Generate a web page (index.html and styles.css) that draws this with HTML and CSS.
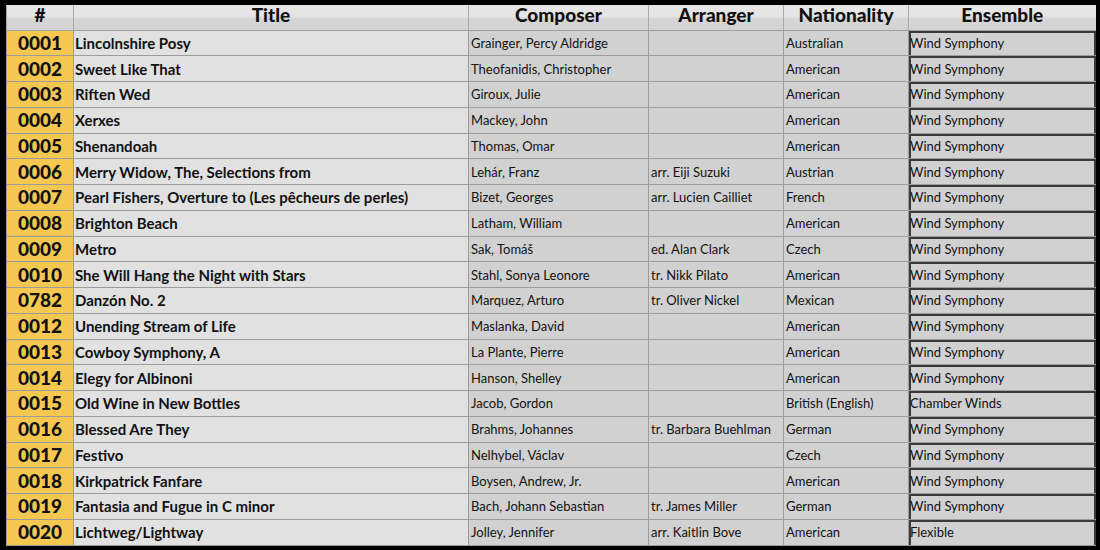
FILE: index.html
```html
<!DOCTYPE html>
<html>
<head>
<meta charset="utf-8">
<link rel="stylesheet" href="styles.css">
</head>
<body>
<div class="frame">
<table class="sheet">
<colgroup>
<col class="c-num"><col class="c-title"><col class="c-comp"><col class="c-arr"><col class="c-nat"><col class="c-ens">
</colgroup>
<thead>
<tr><th>#</th><th>Title</th><th>Composer</th><th>Arranger</th><th>Nationality</th><th>Ensemble</th></tr>
</thead>
<tbody>
<tr><td class="num">0001</td><td class="title">Lincolnshire Posy</td><td>Grainger, Percy Aldridge</td><td></td><td>Australian</td><td class="ens">Wind Symphony</td></tr>
<tr><td class="num">0002</td><td class="title">Sweet Like That</td><td>Theofanidis, Christopher</td><td></td><td>American</td><td class="ens">Wind Symphony</td></tr>
<tr><td class="num">0003</td><td class="title">Riften Wed</td><td>Giroux, Julie</td><td></td><td>American</td><td class="ens">Wind Symphony</td></tr>
<tr><td class="num">0004</td><td class="title">Xerxes</td><td>Mackey, John</td><td></td><td>American</td><td class="ens">Wind Symphony</td></tr>
<tr><td class="num">0005</td><td class="title">Shenandoah</td><td>Thomas, Omar</td><td></td><td>American</td><td class="ens">Wind Symphony</td></tr>
<tr><td class="num">0006</td><td class="title">Merry Widow, The, Selections from</td><td>Lehár, Franz</td><td>arr. Eiji Suzuki</td><td>Austrian</td><td class="ens">Wind Symphony</td></tr>
<tr><td class="num">0007</td><td class="title">Pearl Fishers, Overture to (Les pêcheurs de perles)</td><td>Bizet, Georges</td><td>arr. Lucien Cailliet</td><td>French</td><td class="ens">Wind Symphony</td></tr>
<tr><td class="num">0008</td><td class="title">Brighton Beach</td><td>Latham, William</td><td></td><td>American</td><td class="ens">Wind Symphony</td></tr>
<tr><td class="num">0009</td><td class="title">Metro</td><td>Sak, Tomáš</td><td>ed. Alan Clark</td><td>Czech</td><td class="ens">Wind Symphony</td></tr>
<tr><td class="num">0010</td><td class="title">She Will Hang the Night with Stars</td><td>Stahl, Sonya Leonore</td><td>tr. Nikk Pilato</td><td>American</td><td class="ens">Wind Symphony</td></tr>
<tr><td class="num">0782</td><td class="title">Danzón No. 2</td><td>Marquez, Arturo</td><td>tr. Oliver Nickel</td><td>Mexican</td><td class="ens">Wind Symphony</td></tr>
<tr><td class="num">0012</td><td class="title">Unending Stream of Life</td><td>Maslanka, David</td><td></td><td>American</td><td class="ens">Wind Symphony</td></tr>
<tr><td class="num">0013</td><td class="title">Cowboy Symphony, A</td><td>La Plante, Pierre</td><td></td><td>American</td><td class="ens">Wind Symphony</td></tr>
<tr><td class="num">0014</td><td class="title">Elegy for Albinoni</td><td>Hanson, Shelley</td><td></td><td>American</td><td class="ens">Wind Symphony</td></tr>
<tr><td class="num">0015</td><td class="title">Old Wine in New Bottles</td><td>Jacob, Gordon</td><td></td><td>British (English)</td><td class="ens">Chamber Winds</td></tr>
<tr><td class="num">0016</td><td class="title">Blessed Are They</td><td>Brahms, Johannes</td><td>tr. Barbara Buehlman</td><td>German</td><td class="ens">Wind Symphony</td></tr>
<tr><td class="num">0017</td><td class="title">Festivo</td><td>Nelhybel, Václav</td><td></td><td>Czech</td><td class="ens">Wind Symphony</td></tr>
<tr><td class="num">0018</td><td class="title">Kirkpatrick Fanfare</td><td>Boysen, Andrew, Jr.</td><td></td><td>American</td><td class="ens">Wind Symphony</td></tr>
<tr><td class="num">0019</td><td class="title">Fantasia and Fugue in C minor</td><td>Bach, Johann Sebastian</td><td>tr. James Miller</td><td>German</td><td class="ens">Wind Symphony</td></tr>
<tr><td class="num">0020</td><td class="title">Lichtweg/Lightway</td><td>Jolley, Jennifer</td><td>arr. Kaitlin Bove</td><td>American</td><td class="ens">Flexible</td></tr>
</tbody>
</table>
</div>
</body>
</html>
```
FILE: styles.css
```css
html, body {
  margin: 0;
  padding: 0;
  background: #000;
}
.frame {
  width: 1100px;
  height: 550px;
  box-sizing: border-box;
  padding: 5px 5px 5px 6px;
  background: #000;
}
.sheet {
  width: 1089px;
  border-collapse: collapse;
  table-layout: fixed;
  font-family: Lato, "Liberation Sans", sans-serif;
  color: #111;
}
.c-num { width: 67px; }
.c-title { width: 395px; }
.c-comp { width: 180px; }
.c-arr { width: 135px; }
.c-nat { width: 125px; }
.c-ens { width: 187px; }

.sheet th {
  height: 25px;
  padding: 0 0 4px 0;
  box-sizing: border-box;
  font-size: 19px;
  font-weight: 900;
  text-align: center;
  line-height: 20px;
  background: linear-gradient(#e6e6e6 0%, #e4e4e4 45%, #d5d5d5 55%, #d3d3d3 100%);
  border-left: 1px solid #a8a8a8;
  border-bottom: 1px solid #a0a0a0;
}
.sheet tbody tr {
  height: 25.75px;
}
.sheet td {
  padding: 0 2px;
  font-size: 13px;
  font-weight: 400;
  line-height: 16px;
  white-space: nowrap;
  overflow: hidden;
  background: #d1d1d1;
  border: 1px solid #9c9c9c;
  vertical-align: middle;
}
.sheet td.num {
  background: #f6c851;
  font-size: 19px;
  font-weight: 900;
  text-align: center;
  padding: 0;
}
.sheet td.title {
  background: #e1e1e1;
  font-size: 15px;
  font-weight: 700;
  padding-left: 1px;
}
.sheet td.ens {
  padding-left: 1px;
  border-right: none;
  box-shadow: inset 2px 2px 0 #3a3a3a, inset -2px 0 0 #3a3a3a;
}
```
